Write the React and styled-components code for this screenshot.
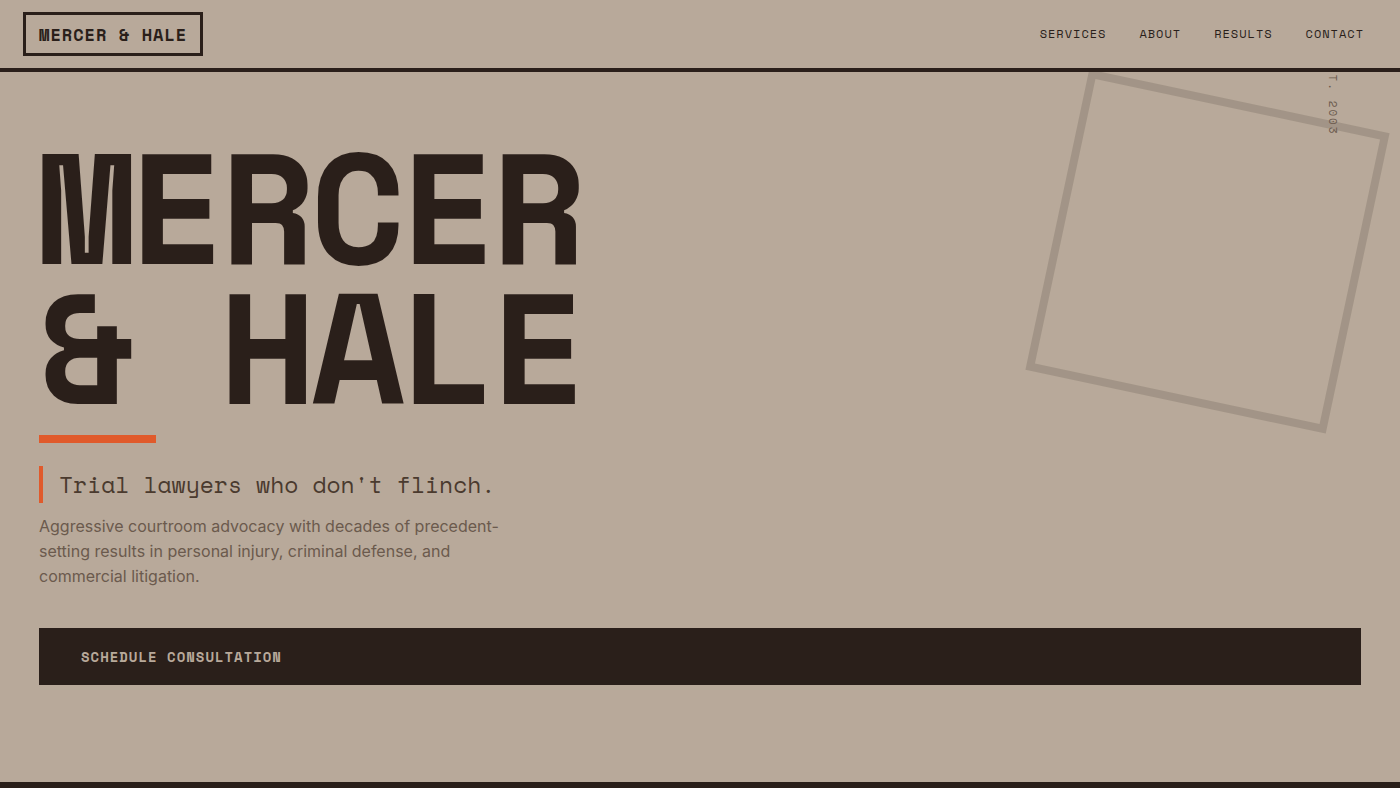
import React from 'react'
import styled, { createGlobalStyle } from 'styled-components'

const GlobalStyle = createGlobalStyle`
    * {
        box-sizing: border-box;
    }

    body {
        margin: 0;
        background: #b8a99a;
        color: #2a1f1a;
        font-family: Inter, sans-serif;
    }

    h1, p {
        margin: 0;
    }
`;

const mono = '"Space Mono", "DejaVu Sans Mono", monospace'

const Page = styled.div`
    display: flex;
    flex-direction: column;
    min-height: 100vh;
`;

const Header = styled.header`
    position: sticky;
    top: 0;
    z-index: 10;
    display: flex;
    justify-content: space-between;
    align-items: center;
    padding: 12px 36px 12px 23px;
    border-bottom: 4px solid #2a1f1a;
    background: #b8a99a;
`;

const Logo = styled.a`
    padding: 9px 13px 7px;
    border: 3px solid #2a1f1a;
    color: #2a1f1a;
    font: 700 17px/22px ${mono};
    letter-spacing: 1px;
    text-decoration: none;
    text-transform: uppercase;
`;

const Nav = styled.nav`
    display: flex;
    gap: 33px;
`;

const NavLink = styled.a`
    color: #2a1f1a;
    font: 400 12px/18px ${mono};
    letter-spacing: 1px;
    text-decoration: none;
    text-transform: uppercase;
`;

const Hero = styled.section`
    position: relative;
    display: flex;
    flex: 1;
    flex-direction: column;
    overflow: hidden;
    padding: 63px 39px;
    border-bottom: 6px solid #2a1f1a;
`;

const Frame = styled.div`
    position: absolute;
    top: 26px;
    right: 39px;
    width: 307px;
    height: 307px;
    border: 8px solid #2a1f1a;
    opacity: 0.15;
    transform: rotate(12deg);
`;

const Established = styled.span`
    position: absolute;
    top: -15px;
    right: 59px;
    color: #6b5a4d;
    font: 400 11px/16px ${mono};
    letter-spacing: 2px;
    writing-mode: vertical-rl;
`;

const Title = styled.h1`
    font: 700 156px/140px ${mono};
    letter-spacing: -5px;
    text-transform: uppercase;
`;

const Accent = styled.div`
    width: 117px;
    height: 8px;
    margin: 20px 0 23px;
    background: #e05a2b;
`;

const Tagline = styled.p`
    padding-left: 16px;
    border-left: 4px solid #e05a2b;
    color: #4a3a2e;
    font: 400 23px/37px ${mono};
`;

const Summary = styled.p`
    max-width: 467px;
    margin: 11px 0 39px;
    color: #6b5a4d;
    font-size: 16px;
    line-height: 25px;
`;

const Cta = styled.a`
    padding: 18px 42px;
    background: #2a1f1a;
    color: #b8a99a;
    font: 700 14px/21px ${mono};
    letter-spacing: 1px;
    text-decoration: none;
    text-transform: uppercase;
`;

const links = ['Services', 'About', 'Results', 'Contact']

const App = () => {
    return (
        <Page>
            <GlobalStyle />
            <Header>
                <Logo href="#home">Mercer &amp; Hale</Logo>
                <Nav>
                    {links.map(link => (
                        <NavLink key={link} href={`#${link.toLowerCase()}`}>{link}</NavLink>
                    ))}
                </Nav>
            </Header>
            <Hero id="home">
                <Frame />
                <Established>EST. 2003</Established>
                <Title>Mercer<br />&amp; Hale</Title>
                <Accent />
                <Tagline>Trial lawyers who don't flinch.</Tagline>
                <Summary>
                    Aggressive courtroom advocacy with decades of precedent-setting
                    results in personal injury, criminal defense, and commercial litigation.
                </Summary>
                <Cta href="#contact">Schedule Consultation</Cta>
            </Hero>
        </Page>
    )
}

export default App
